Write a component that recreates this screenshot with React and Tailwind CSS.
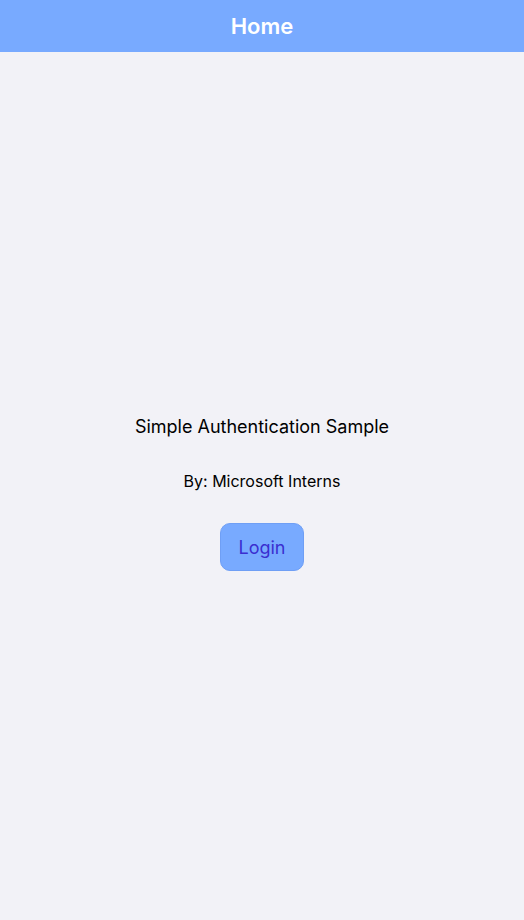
export default function App() {
  return (
    <div className="flex h-[920px] w-full flex-col bg-[#f2f2f7] font-['Inter',sans-serif]">
      <header className="flex h-[52px] shrink-0 items-center justify-center bg-[#78aaff]">
        <h1 className="text-[22px] font-semibold text-white">Home</h1>
      </header>
      <main className="flex flex-1 flex-col items-center justify-center pt-[14px]">
        <p className="text-[18px] leading-[24px] text-black">Simple Authentication Sample</p>
        <p className="mt-[32px] text-[16px] leading-[20px] text-black">By: Microsoft Interns</p>
        <button className="mt-[32px] h-[48px] w-[84px] rounded-[10px] border border-[#6f9ff5] bg-[#78aaff] text-[18px] text-[#3a2fd0]">
          Login
        </button>
      </main>
    </div>
  );
}
